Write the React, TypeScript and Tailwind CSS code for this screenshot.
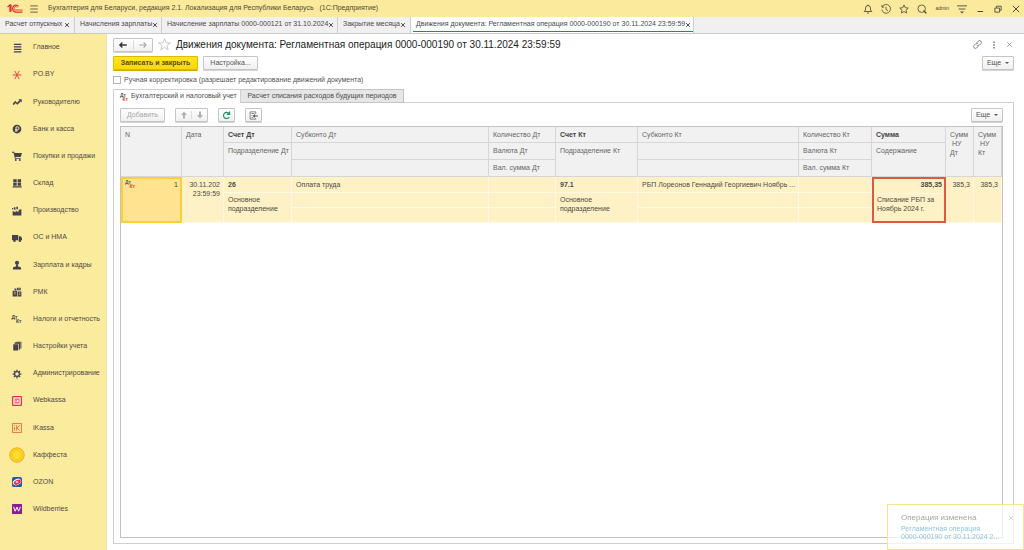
import React, { useState } from 'react';

type IconProps = { className?: string };

const Svg: React.FC<IconProps & { children: React.ReactNode; stroke?: boolean }> = ({ className = 'w-[10px] h-[10px]', children, stroke }) => (
    <svg
        viewBox="0 0 16 16"
        className={`shrink-0 ${className}`}
        fill={stroke ? 'none' : 'currentColor'}
        stroke={stroke ? 'currentColor' : 'none'}
        strokeWidth={stroke ? 1.6 : 0}
        aria-hidden="true"
    >
        {children}
    </svg>
);

const DtKt: React.FC<{ color?: boolean }> = ({ color }) => (
    <span className="flex shrink-0 flex-col w-[10px] text-[5px] leading-[4px] font-bold" aria-hidden="true">
        <span className={color ? 'text-[#3f6b52]' : ''}>Дт</span>
        <span className={`self-end ${color ? 'text-[#d8453c]' : ''}`}>Кт</span>
    </span>
);

const sections: { label: string; icon: React.ReactNode }[] = [
    { label: 'Главное', icon: <Svg><path d="M3 1h12v2H3zM3 5h12v2H3zM3 9h12v2H3zM3 13h12v2H3z" /></Svg> },
    {
        label: 'PO.BY',
        icon: (
            <Svg stroke className="w-[10px] h-[10px] text-[#e5434b]">
                <path d="M1 8h14M4.500 1.500L8 8l3.500-6.500M4.500 14.500L8 8l3.500 6.500" />
            </Svg>
        ),
    },
    {
        label: 'Руководителю',
        icon: <Svg><path d="M1 11l4-5 3 3 4-4-2-1.500h5.500V9L14 7l-5.500 5.500L5.500 9.500 3 13z" /></Svg>,
    },
    {
        label: 'Банк и касса',
        icon: (
            <Svg>
                <circle cx="8" cy="8" r="7" />
                <path d="M6.500 12.500V4.500h2.500a2.200 2.200 0 0 1 0 4.500H5M5 11h4" fill="none" stroke="#fbeb9d" strokeWidth="1.500" />
            </Svg>
        ),
    },
    {
        label: 'Покупки и продажи',
        icon: (
            <Svg>
                <path d="M0 1h3.500l.8 2H16l-2 6.500H5.500L6 11h8v1.500H4.700L2.500 2.700H0z" />
                <circle cx="6" cy="14.300" r="1.500" />
                <circle cx="12.500" cy="14.300" r="1.500" />
            </Svg>
        ),
    },
    { label: 'Склад', icon: <Svg><path d="M2 2h5.500v5H2zM9 2h5.500v5H9zM2 8h5.500v4.500H2zM9 8h5.500v4.500H9zM1 13.300h14.500V15H1z" /></Svg> },
    { label: 'Производство', icon: <Svg><path d="M1 15V8l5 2V7l4 3 1-4 4-1v10zM3 2h2.500v4H3zM7 1h2.500v4H7zM0 3h2v2H0z" /></Svg> },
    {
        label: 'ОС и НМА',
        icon: (
            <Svg>
                <path d="M0 3h10v8.500H0zM11 5h3l2 3.500v3h-5z" />
                <circle cx="4" cy="12.500" r="2" />
                <circle cx="12.500" cy="12.500" r="2" />
            </Svg>
        ),
    },
    {
        label: 'Зарплата и кадры',
        icon: (
            <Svg>
                <circle cx="8" cy="4.500" r="3.300" />
                <path d="M6.500 7h3v3l5 2v3h-13v-3l5-2z" />
            </Svg>
        ),
    },
    {
        label: 'РМК',
        icon: (
            <Svg>
                <path d="M1 6h7v9H1zM9 7h6v8H9zM8 1h6v4H8zM4 2.500h3V5H4z" />
                <path d="M3 8.500h3M3 11h3M11 9.500h2.500M11 12h2.500M9.500 3h3" stroke="#fbeb9d" strokeWidth="1" />
            </Svg>
        ),
    },
    { label: 'Налоги и отчетность', icon: <DtKt /> },
    {
        label: 'Настройки учета',
        icon: <Svg><path d="M2 5h8v10H2zM4 3.500h7.500V14h1V2.500H5zM7 1h8v11h-1.500V1.800H7z" /><path d="M4.500 2.500h8.500V13h-2V4.500H4z" /></Svg>,
    },
    {
        label: 'Администрирование',
        icon: (
            <Svg stroke>
                <circle cx="8" cy="8" r="3.900" strokeWidth="2" />
                <path d="M8 1v3M8 12v3M1 8h3M12 8h3M3 3l2 2M11 11l2 2M13 3l-2 2M5 11l-2 2" strokeWidth="2" />
            </Svg>
        ),
    },
    {
        label: 'Webkassa',
        icon: (
            <Svg stroke className="w-[10px] h-[10px] text-[#e2343f]">
                <rect x="1" y="1" width="14" height="14" rx="1" fill="#fff1ee" strokeWidth="2" />
                <path d="M4 5h8M4 8h4M4 11h8M10 8h2.500" />
            </Svg>
        ),
    },
    {
        label: 'iKassa',
        icon: (
            <Svg stroke className="w-[10px] h-[10px] text-[#e0653f]">
                <rect x="1" y="1" width="14" height="14" strokeWidth="1.400" />
                <path d="M4 6.500V12M4 3.500v1.300M7.500 3.500V12M12.500 3.500L8 8l4.500 4" strokeWidth="1.400" />
            </Svg>
        ),
    },
    {
        label: 'Каффеста',
        icon: (
            <Svg className="w-[16px] h-[16px]">
                <circle cx="8" cy="8" r="7.200" fill="#fdd51f" stroke="#efaa1d" strokeWidth="1" />
                <circle cx="8" cy="8" r="4.800" fill="#ffdc2e" stroke="#f3bd20" strokeWidth=".7" />
            </Svg>
        ),
    },
    {
        label: 'OZON',
        icon: (
            <Svg>
                <rect width="16" height="16" rx="3" fill="#2458a6" />
                <ellipse cx="8" cy="8" rx="7" ry="4.800" fill="#fff" transform="rotate(-25 8 8)" />
                <ellipse cx="8.300" cy="8.500" rx="6" ry="3.600" fill="#ed2a4b" transform="rotate(-25 8 8)" />
                <ellipse cx="8" cy="8" rx="2.400" ry="1.300" fill="#fff" />
            </Svg>
        ),
    },
    {
        label: 'Wildberries',
        icon: (
            <Svg>
                <rect width="16" height="16" rx="1" fill="#8b1c93" />
                <path d="M2.500 4.500l2.500 7L8 5l2.500 6.500 3-7" fill="none" stroke="#fff" strokeWidth="1.600" />
            </Svg>
        ),
    },
];

const windows = [
    { title: 'Расчет отпускных', width: 'w-[75px]' },
    { title: 'Начисления зарплаты', width: 'w-[87px]' },
    { title: 'Начисление зарплаты 0000-000121 от 31.10.2024', width: 'w-[176px]' },
    { title: 'Закрытие месяца', width: 'w-[73px]' },
    { title: 'Движения документа: Регламентная операция 0000-000190 от 30.11.2024 23:59:59', width: 'w-[283px]' },
];

const button = 'flex items-center justify-center h-[14px] border border-[#c4c4c4] rounded-[1px] bg-gradient-to-b from-white to-[#f0f0f0] shadow-[0_1px_0_#d5d5d5] text-[#555]';

const MoreButton: React.FC = () => (
    <button type="button" className={`${button} ml-auto w-[32px] gap-[4px] text-[7px]`}>
        Еще
        <span className="border-x-2 border-t-2 border-x-transparent border-t-[#555]" />
    </button>
);

const CrossIcon: React.FC<IconProps & { bold?: boolean }> = ({ className, bold }) => (
    <Svg stroke className={className}><path d="M3 3l10 10M13 3L3 13" strokeWidth={bold ? 2.6 : 1.6} /></Svg>
);

const TitleBar: React.FC = () => (
    <header className="flex items-center h-[17px] shrink-0 bg-[#fbe99c] text-[#4d4939]">
        <svg viewBox="0 0 32 18" className="ml-[7px] w-[16px] h-[9px]" fill="none" stroke="#df2f35" strokeWidth="2.500" aria-label="1С">
            <path d="M1 6l5-4v14M8 15V1" />
            <path d="M23 5A6.500 7 0 1 0 18 16h13" />
            <path d="M20 7a3 3.500 0 1 0-2.500 5H31" strokeWidth="1.800" />
        </svg>
        <button type="button" aria-label="Меню" className="ml-[6px]">
            <Svg stroke><path d="M2 3h12M2 8h12M2 13h12" strokeWidth="1.300" /></Svg>
        </button>
        <span className="ml-[9px] text-[7px] whitespace-pre">Бухгалтерия для Беларуси, редакция 2.1. Локализация для Республики Беларусь   (1С:Предприятие)</span>
        <div className="ml-auto flex items-center gap-[8px] pr-[3px]">
            <button type="button" aria-label="Уведомления"><Svg stroke><path d="M2 12h12l-2-2.500V6.500a4 4 0 0 0-8 0v3zM8 1v2M6.500 14.500h3" strokeWidth="1.400" /></Svg></button>
            <button type="button" aria-label="История"><Svg stroke><path d="M2 4.500A7 7 0 1 1 1.300 9M1.500 1.500V5H5M8 4.500V9l3 1.500" strokeWidth="1.300" /></Svg></button>
            <button type="button" aria-label="Избранное"><Svg stroke><path d="M8 1.500l2 4.500 4.800.5-3.600 3.200 1 4.800L8 12l-4.200 2.500 1-4.800L1.200 6.500 6 6z" strokeWidth="1.300" /></Svg></button>
            <button type="button" aria-label="Поиск"><Svg stroke><circle cx="7.500" cy="7.500" r="6" strokeWidth="1.300" /><path d="M10.500 10.500l4.500 4.500" strokeWidth="2.200" /></Svg></button>
            <span className="text-[5px] leading-[9px]">admin</span>
            <button type="button" aria-label="Настройки"><Svg stroke><path d="M0 3h16M2.500 8h11" strokeWidth="1.400" /><path d="M5 12h6l-3 3z" fill="currentColor" stroke="none" /></Svg></button>
            <button type="button" aria-label="Свернуть"><Svg stroke><path d="M4 12h9" /></Svg></button>
            <button type="button" aria-label="Развернуть"><Svg stroke><path d="M3 6.500h7.500V13H3zM5.500 6V3.500H13V10h-2" strokeWidth="1.400" /></Svg></button>
            <button type="button" aria-label="Закрыть"><CrossIcon /></button>
        </div>
    </header>
);

const WindowTabs: React.FC = () => (
    <nav className="flex h-[17px] shrink-0 bg-[#f0f0f0] border-b border-[#c9c9c9] text-[7px] text-[#4a4a4a]">
        {windows.map((w, i) => {
            const active = i === windows.length - 1;
            return (
                <div key={w.title} className={`flex px-[2px] border-r border-[#cfcfcf] ${w.width} ${active ? 'bg-white' : ''}`}>
                    <div className={`flex grow items-center justify-between pl-[3px] pr-[2px] pt-[1px] mb-px border-b ${active ? 'border-[#009a50]' : 'border-transparent'}`}>
                        <a href="#" className="whitespace-nowrap">{w.title}</a>
                        <button type="button" aria-label="Закрыть вкладку"><CrossIcon bold className="w-[6px] h-[6px]" /></button>
                    </div>
                </div>
            );
        })}
    </nav>
);

const Sidebar: React.FC = () => (
    <aside className="w-[107px] shrink-0 bg-[#fbeb9d] border-r border-[#f3dfa0]">
        <nav className="flex flex-col justify-between h-[489px]">
            {sections.map((s) => (
                <a key={s.label} href="#" className="flex items-center h-[27px] text-[7px] text-[#504a45] whitespace-nowrap">
                    <span className="flex items-center justify-center w-[33px] shrink-0 text-[#45414f]">{s.icon}</span>
                    {s.label}
                </a>
            ))}
        </nav>
    </aside>
);

const th = 'border-r border-b border-[#d6d6d6] pl-[4px] pr-[2px] py-[3px] align-top text-left';
const td = 'border-r border-b border-[#fff8e2] pl-[4px] pr-[3px] py-[3px] align-top';
const tdLower = 'border-r border-b border-[#fff8e2] pl-[4px] pr-[3px] py-[2px] align-top';

const EntriesTable: React.FC = () => (
    <table className="w-full table-fixed border-separate border-spacing-0 text-[7px] leading-[9px] text-[#666]">
        <colgroup>
            <col className="w-[61px]" />
            <col className="w-[42px]" />
            <col className="w-[68px]" />
            <col className="w-[197px]" />
            <col className="w-[67px]" />
            <col className="w-[82px]" />
            <col className="w-[161px]" />
            <col className="w-[73px]" />
            <col className="w-[74px]" />
            <col className="w-[28px]" />
            <col className="w-[28px]" />
        </colgroup>
        <thead className="bg-[#f1f1f1]">
            <tr className="h-[16px]">
                <th rowSpan={3} className={`${th} font-normal`}>N</th>
                <th rowSpan={3} className={`${th} font-normal`}>Дата</th>
                <th className={`${th} font-bold text-[#444]`}>Счет Дт</th>
                <th className={`${th} font-normal`}>Субконто Дт</th>
                <th className={`${th} font-normal`}>Количество Дт</th>
                <th className={`${th} font-bold text-[#444]`}>Счет Кт</th>
                <th className={`${th} font-normal`}>Субконто Кт</th>
                <th className={`${th} font-normal`}>Количество Кт</th>
                <th className={`${th} font-bold text-[#444]`}>Сумма</th>
                <th rowSpan={3} className={`${th} font-normal whitespace-pre`}>{'Сумм\n НУ\nДт'}</th>
                <th rowSpan={3} className={`${th} font-normal whitespace-pre`}>{'Сумм\n НУ\nКт'}</th>
            </tr>
            <tr className="h-[17px]">
                <th rowSpan={2} className={`${th} font-normal whitespace-nowrap`}>Подразделение Дт</th>
                <th className={th} />
                <th className={`${th} font-normal`}>Валюта Дт</th>
                <th rowSpan={2} className={`${th} font-normal`}>Подразделение Кт</th>
                <th className={th} />
                <th className={`${th} font-normal`}>Валюта Кт</th>
                <th rowSpan={2} className={`${th} font-normal`}>Содержание</th>
            </tr>
            <tr className="h-[17px]">
                <th className={th} />
                <th className={`${th} font-normal`}>Вал. сумма Дт</th>
                <th className={th} />
                <th className={`${th} font-normal`}>Вал. сумма Кт</th>
            </tr>
        </thead>
        <tbody className="bg-[#fef1c6] text-[#4d4a42]">
            <tr className="h-[15px]">
                <td rowSpan={3} className="p-0 h-px align-top">
                    <div className="flex justify-between h-full border-2 border-[#fbcf3b] bg-[#ffe391] px-[2px] py-[1px]">
                        <DtKt color />
                        <span>1</span>
                    </div>
                </td>
                <td rowSpan={3} className={`${td} text-right`}>30.11.202 23:59:59</td>
                <td className={`${td} font-bold`}>26</td>
                <td className={td}>Оплата труда</td>
                <td className={td} />
                <td className={`${td} font-bold`}>97.1</td>
                <td className={`${td} whitespace-nowrap`}>РБП Лореонов Геннадий Георгиевич Ноябрь ...</td>
                <td className={td} />
                <td className="border-x-2 border-t-2 border-[#dc5a42] px-[2px] py-[1px] align-top text-right font-bold">385,35</td>
                <td rowSpan={3} className={`${td} text-right`}>385,3</td>
                <td rowSpan={3} className={`${td} text-right`}>385,3</td>
            </tr>
            <tr className="h-[15px]">
                <td rowSpan={2} className={tdLower}>Основное подразделение</td>
                <td className={td} />
                <td className={td} />
                <td rowSpan={2} className={tdLower}>Основное подразделение</td>
                <td className={td} />
                <td className={td} />
                <td rowSpan={2} className="p-0 h-px align-top">
                    <div className="h-full border-x-2 border-b-2 border-[#dc5a42] px-[3px]">
                        <div className="border-t border-[#fff8e2] pt-[1px] whitespace-nowrap">Списание РБП за<br />Ноябрь 2024 г.</div>
                    </div>
                </td>
            </tr>
            <tr className="h-[15px]">
                <td className={td} />
                <td className={td} />
                <td className={td} />
                <td className={td} />
            </tr>
        </tbody>
    </table>
);

const Toast: React.FC = () => (
    <div className="fixed right-0 bottom-0 flex w-[137px] h-[46px] items-start border border-[#fde58e] bg-white/70 pl-[13px] pt-[7px] pr-[9px]">
        <div className="grow whitespace-nowrap">
            <p className="text-[8px] leading-[11px] text-[#a5a5a0]">Операция изменена</p>
            <a href="#" className="mt-[2px] block text-[7px] leading-[8px] text-[#8fc3dc]">
                Регламентная операция<br />0000-000190 от 30.11.2024 2...
            </a>
        </div>
        <button type="button" aria-label="Закрыть" className="mt-[3px] text-[#b5b5b5]"><CrossIcon className="w-[6px] h-[6px]" /></button>
    </div>
);

const App: React.FC = () => {
    const [manual, setManual] = useState(false);

    return (
        <div className="flex flex-col min-h-screen bg-white font-['Liberation_Sans',Arial,sans-serif]">
            <TitleBar />
            <WindowTabs />
            <div className="flex grow">
                <Sidebar />
                <main className="flex flex-col grow min-w-0 pt-[4px] pl-[6px] pr-[10px] pb-[6px]">
                    <div className="flex items-center h-[13px]">
                        <div className={`${button} w-[40px]`}>
                            <button type="button" aria-label="Назад" className="flex grow justify-center text-[#333]"><Svg stroke><path d="M14 8H3M7 4L3 8l4 4" strokeWidth="2.200" /></Svg></button>
                            <button type="button" aria-label="Вперед" className="flex grow justify-center border-l border-[#ddd] text-[#aaa]"><Svg stroke><path d="M2 8h11M9 4l4 4-4 4" strokeWidth="1.800" /></Svg></button>
                        </div>
                        <button type="button" aria-label="В избранное" className="ml-[5px] text-[#bbb]">
                            <Svg stroke className="w-[13px] h-[13px]"><path d="M8 1l2 5h5.200L11 9.300l1.500 5.200L8 11.500l-4.500 3L5 9.300.8 6H6z" strokeWidth="1" /></Svg>
                        </button>
                        <h1 className="ml-[5px] text-[10px] leading-[13px] text-[#1c1c1c] whitespace-nowrap">Движения документа: Регламентная операция 0000-000190 от 30.11.2024 23:59:59</h1>
                        <div className="ml-auto flex items-center gap-[8px] pr-[1px] text-[#777]">
                            <button type="button" aria-label="Ссылка"><Svg stroke className="w-[9px] h-[9px]"><path d="M7 4.500l2.500-2.500a3 3 0 0 1 4.500 4.500L11 9.500a3 3 0 0 1-4.500-.5M9 11.500L6.500 14A3 3 0 0 1 2 9.500L5 6.500a3 3 0 0 1 4.500.5" /></Svg></button>
                            <button type="button" aria-label="Еще действия"><Svg className="w-[8px] h-[8px]"><path d="M6.500 1h3v3h-3zM6.500 6.500h3v3h-3zM6.500 12h3v3h-3z" /></Svg></button>
                            <button type="button" aria-label="Закрыть"><CrossIcon className="w-[7px] h-[7px]" /></button>
                        </div>
                    </div>

                    <div className="mt-[5px] flex gap-[5px] h-[14px]">
                        <button type="button" className="h-[14px] w-[85px] rounded-[1px] border border-[#dfb800] bg-gradient-to-b from-[#ffe420] to-[#fdd800] shadow-[0_1px_0_#cda900] text-[7px] font-bold text-[#5a4a10]">Записать и закрыть</button>
                        <button type="button" className={`${button} w-[55px] text-[7px]`}>Настройка...</button>
                        <MoreButton />
                    </div>

                    <label className="mt-[5px] flex items-center gap-[3px] h-[10px] text-[7px] text-[#555]">
                        <input
                            type="checkbox"
                            checked={manual}
                            onChange={(e) => setManual(e.target.checked)}
                            className="appearance-none w-[8px] h-[8px] border border-[#b5b5b5] bg-white checked:bg-[#fdd800]"
                        />
                        Ручная корректировка (разрешает редактирование движений документа)
                    </label>

                    <div role="tablist" className="relative z-10 mt-[4px] -mb-px flex h-[14px] text-[7px] text-[#4d4d4d] whitespace-nowrap">
                        <button type="button" role="tab" aria-selected="true" className="flex items-center gap-[3px] w-[128px] pl-[4px] border border-b-0 border-[#cfcfcf] bg-white">
                            <DtKt color />
                            Бухгалтерский и налоговый учет
                        </button>
                        <button type="button" role="tab" aria-selected="false" className="w-[163px] border border-l-0 border-[#c4c4c4] bg-[#e6e6e6]">Расчет списания расходов будущих периодов</button>
                    </div>

                    <section className="flex flex-col grow border border-[#cfcfcf] pt-[5px] pl-[6px] pr-[10px] pb-[5px]">
                        <div className="flex h-[14px] text-[7px]">
                            <button type="button" disabled className={`${button} w-[45px] text-[#a8a8a8]`}>Добавить</button>
                            <div className={`${button} ml-[10px] w-[33px] text-[#b2b2b2]`}>
                                <button type="button" aria-label="Вверх" className="flex grow justify-center"><Svg className="w-[8px] h-[8px]"><path d="M8 1l6 7h-4v7H6V8H2z" /></Svg></button>
                                <button type="button" aria-label="Вниз" className="flex grow justify-center border-l border-[#ddd]"><Svg className="w-[8px] h-[8px]"><path d="M8 15l6-7h-4V1H6v7H2z" /></Svg></button>
                            </div>
                            <button type="button" aria-label="Обновить" className={`${button} ml-[10px] w-[17px]`}>
                                <Svg stroke className="w-[9px] h-[9px] text-[#16945a]"><path d="M13 10.500A5.500 5.500 0 1 1 12.500 4.500M13.500 1v5h-5" strokeWidth="2" /></Svg>
                            </button>
                            <button type="button" aria-label="Показать документ" className={`${button} ml-[10px] w-[17px]`}>
                                <Svg stroke className="w-[9px] h-[9px]"><path d="M12 5.500V1.500H2v13h10v-2M4.500 4.500h5M4.500 8h1.500M4.500 11.500h3" strokeWidth="1.200" /><path d="M16 9H8M10.500 6.500L8 9l2.500 2.500" strokeWidth="1.800" /></Svg>
                            </button>
                            <MoreButton />
                        </div>
                        <div className="mt-[4px] grow border border-[#c2c2c2]">
                            <EntriesTable />
                        </div>
                    </section>
                </main>
            </div>
            <Toast />
        </div>
    );
};

export default App;
